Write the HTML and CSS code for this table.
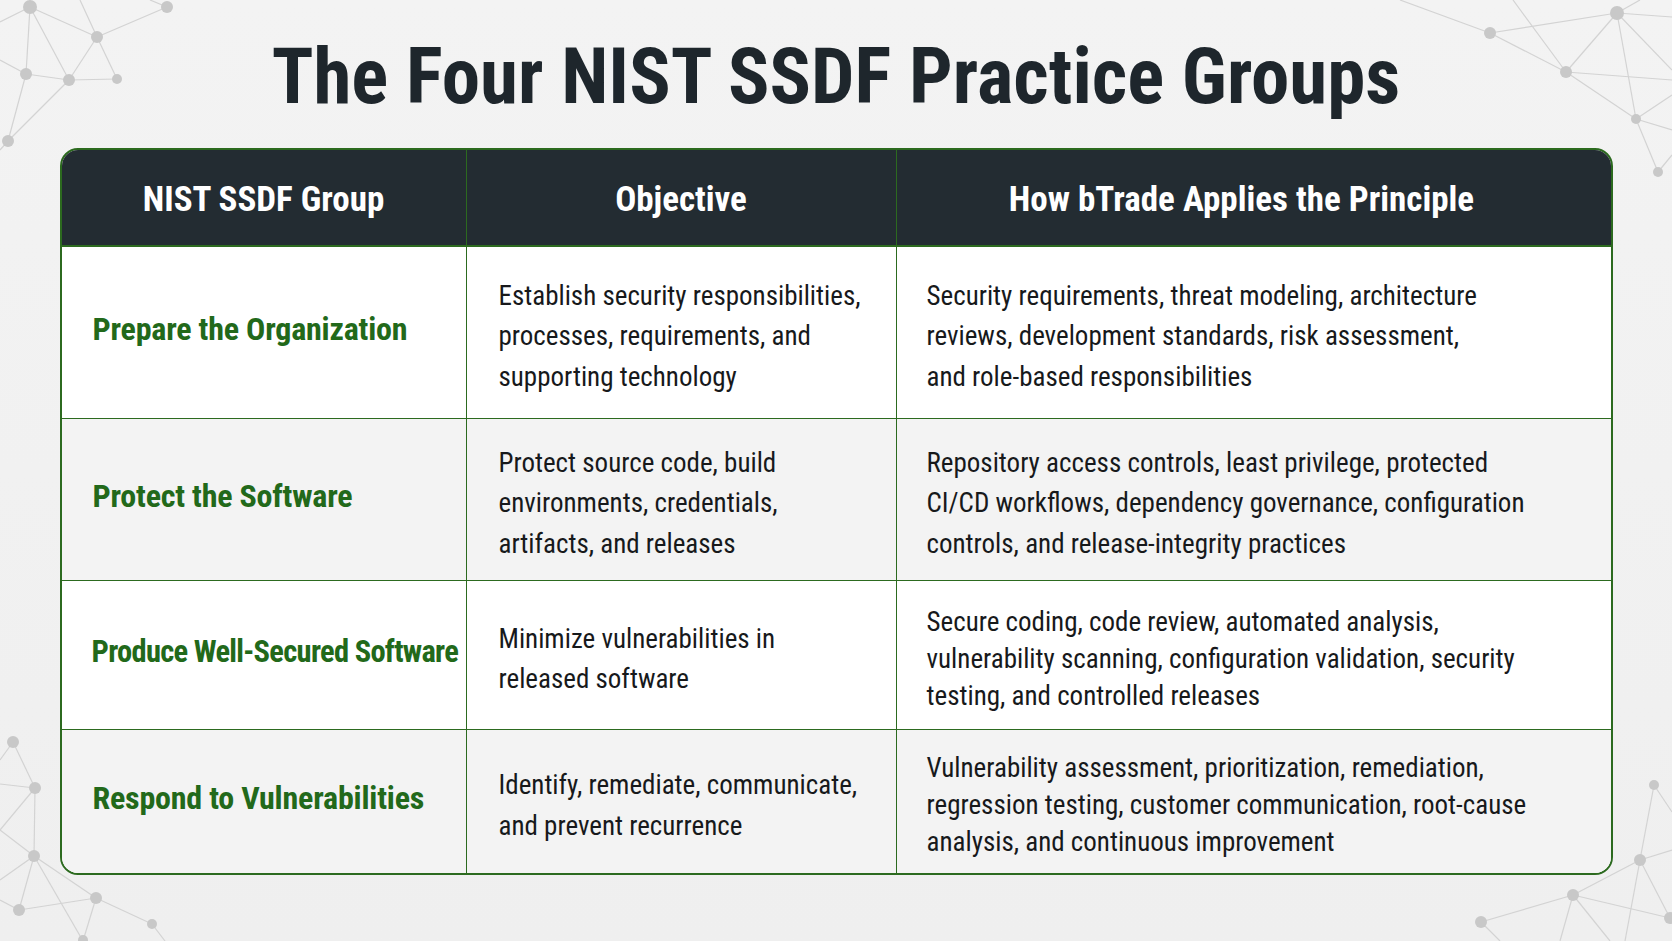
FILE: index.html
```html
<!DOCTYPE html>
<html lang="en">
<head>
<meta charset="utf-8">
<title>The Four NIST SSDF Practice Groups</title>
<link rel="stylesheet" href="styles.css">
</head>
<body>
<div class="page">
  <svg class="network" width="1672" height="941" viewBox="0 0 1672 941" aria-hidden="true">
    <g class="links">
      <line x1="30" y1="7" x2="97" y2="37"/><line x1="97" y1="37" x2="167" y2="7"/>
      <line x1="30" y1="7" x2="26" y2="74"/><line x1="30" y1="7" x2="69" y2="80"/>
      <line x1="26" y1="74" x2="69" y2="80"/><line x1="69" y1="80" x2="117" y2="79"/>
      <line x1="97" y1="37" x2="117" y2="79"/><line x1="97" y1="37" x2="69" y2="80"/>
      <line x1="26" y1="74" x2="8" y2="141"/><line x1="69" y1="80" x2="8" y2="141"/>
      <line x1="26" y1="74" x2="0" y2="60"/><line x1="30" y1="7" x2="0" y2="22"/>
      <line x1="80" y1="0" x2="97" y2="37"/><line x1="167" y1="7" x2="150" y2="0"/>
      <line x1="8" y1="141" x2="0" y2="150"/>
      <line x1="1490" y1="33" x2="1617" y2="13"/><line x1="1490" y1="33" x2="1566" y2="72"/>
      <line x1="1617" y1="13" x2="1566" y2="72"/><line x1="1617" y1="13" x2="1636" y2="119"/>
      <line x1="1566" y1="72" x2="1636" y2="119"/><line x1="1566" y1="72" x2="1672" y2="80"/>
      <line x1="1636" y1="119" x2="1658" y2="172"/><line x1="1636" y1="119" x2="1672" y2="130"/>
      <line x1="1617" y1="13" x2="1672" y2="17"/><line x1="1617" y1="13" x2="1672" y2="70"/>
      <line x1="1513" y1="0" x2="1566" y2="72"/><line x1="1400" y1="0" x2="1490" y2="33"/>
      <line x1="1617" y1="13" x2="1640" y2="0"/><line x1="1636" y1="119" x2="1672" y2="95"/>
      <line x1="1658" y1="172" x2="1672" y2="155"/>
      <line x1="13" y1="742" x2="35" y2="788"/><line x1="35" y1="788" x2="0" y2="830"/>
      <line x1="35" y1="788" x2="34" y2="856"/><line x1="0" y1="830" x2="34" y2="856"/>
      <line x1="34" y1="856" x2="19" y2="910"/><line x1="34" y1="856" x2="96" y2="898"/>
      <line x1="34" y1="856" x2="83" y2="941"/><line x1="19" y1="910" x2="96" y2="898"/>
      <line x1="96" y1="898" x2="152" y2="924"/><line x1="19" y1="910" x2="0" y2="900"/>
      <line x1="13" y1="742" x2="0" y2="760"/><line x1="0" y1="784" x2="35" y2="788"/>
      <line x1="96" y1="898" x2="83" y2="941"/><line x1="152" y1="924" x2="165" y2="941"/>
      <line x1="0" y1="880" x2="34" y2="856"/>
      <line x1="1654" y1="785" x2="1640" y2="860"/><line x1="1654" y1="785" x2="1672" y2="812"/>
      <line x1="1640" y1="860" x2="1573" y2="895"/><line x1="1640" y1="860" x2="1670" y2="918"/>
      <line x1="1640" y1="860" x2="1672" y2="850"/><line x1="1573" y1="895" x2="1481" y2="922"/>
      <line x1="1573" y1="895" x2="1670" y2="918"/><line x1="1573" y1="895" x2="1560" y2="941"/>
      <line x1="1481" y1="922" x2="1500" y2="941"/><line x1="1640" y1="860" x2="1625" y2="941"/>
      <line x1="1573" y1="895" x2="1610" y2="941"/>
    </g>
    <g class="nodes">
      <circle cx="30" cy="7" r="7"/><circle cx="167" cy="7" r="6"/><circle cx="97" cy="37" r="6"/>
      <circle cx="26" cy="74" r="6"/><circle cx="69" cy="80" r="6"/><circle cx="117" cy="79" r="5"/>
      <circle cx="8" cy="141" r="6"/>
      <circle cx="1490" cy="33" r="6"/><circle cx="1617" cy="13" r="7"/><circle cx="1566" cy="72" r="6"/>
      <circle cx="1636" cy="119" r="5"/><circle cx="1658" cy="172" r="5"/>
      <circle cx="13" cy="742" r="6"/><circle cx="35" cy="788" r="6"/><circle cx="34" cy="856" r="6"/>
      <circle cx="19" cy="910" r="6"/><circle cx="96" cy="898" r="6"/><circle cx="83" cy="940" r="5"/>
      <circle cx="152" cy="924" r="5"/>
      <circle cx="1654" cy="785" r="5"/><circle cx="1640" cy="860" r="6"/><circle cx="1573" cy="895" r="6"/>
      <circle cx="1481" cy="922" r="6"/><circle cx="1670" cy="918" r="6"/>
    </g>
  </svg>

  <main class="content">
    <h1 class="title">The Four NIST SSDF Practice Groups</h1>

    <div class="table" role="table">
      <div class="th first">NIST SSDF Group</div>
      <div class="th">Objective</div>
      <div class="th last">How bTrade Applies the Principle</div>

      <div class="td group">Prepare the Organization</div>
      <div class="td">Establish security responsibilities,<br>processes, requirements, and<br>supporting technology</div>
      <div class="td last">Security requirements, threat modeling, architecture<br>reviews, development standards, risk assessment,<br>and role-based responsibilities</div>

      <div class="td group alt">Protect the Software</div>
      <div class="td alt">Protect source code, build<br>environments, credentials,<br>artifacts, and releases</div>
      <div class="td alt last">Repository access controls, least privilege, protected<br>CI/CD workflows, dependency governance, configuration<br>controls, and release-integrity practices</div>

      <div class="td group squeeze">Produce Well-Secured Software</div>
      <div class="td">Minimize vulnerabilities in<br>released software</div>
      <div class="td last tight">Secure coding, code review, automated analysis,<br>vulnerability scanning, configuration validation, security<br>testing, and controlled releases</div>

      <div class="td group alt bottom">Respond to Vulnerabilities</div>
      <div class="td alt bottom">Identify, remediate, communicate,<br>and prevent recurrence</div>
      <div class="td alt bottom last tight">Vulnerability assessment, prioritization, remediation,<br>regression testing, customer communication, root-cause<br>analysis, and continuous improvement</div>
    </div>
  </main>
</div>
</body>
</html>
```

FILE: styles.css
```css
* { box-sizing: border-box; }

html, body {
  margin: 0;
  padding: 0;
}

body {
  background: #f1f1f1;
  font-family: "Roboto Condensed", "Liberation Sans Narrow", "Arial Narrow", "DejaVu Sans Condensed", sans-serif;
  font-stretch: condensed;
  color: #1c1f22;
}

.page {
  position: relative;
  width: 1672px;
  height: 941px;
  overflow: hidden;
  background: linear-gradient(180deg, #f3f3f3 0%, #efefef 100%);
}

.network {
  position: absolute;
  left: 0;
  top: 0;
  z-index: 0;
}

.network .links line {
  stroke: #d3d3d3;
  stroke-width: 1.2;
}

.network .nodes circle {
  fill: #c8c8c8;
}

.content {
  position: relative;
  z-index: 1;
  display: flex;
  flex-direction: column;
  align-items: center;
}

.title {
  margin: 0;
  height: 148px;
  padding-top: 32px;
  font-weight: 700;
  font-size: 77px;
  line-height: 90px;
  color: #1e262c;
  white-space: nowrap;
}

.table {
  width: 1553px;
  display: grid;
  grid-template-columns: 405px 430px minmax(0, 1fr);
  grid-template-rows: 97px 172px 162px 149px 143px;
  border: 2px solid #2c6a1f;
  border-radius: 18px;
  overflow: hidden;
  background: #ffffff;
}

.th {
  background: #232c32;
  color: #ffffff;
  font-weight: 700;
  font-size: 35px;
  display: flex;
  align-items: center;
  justify-content: center;
  border-right: 1.5px solid #2c6a1f;
  border-bottom: 2px solid #2c6a1f;
  padding-top: 3px;
  white-space: nowrap;
}

.th.last {
  padding-right: 24px;
}

.th.last,
.td.last {
  border-right: none;
}

.td {
  display: flex;
  align-items: center;
  padding: 8px 20px 0 32px;
  background: #ffffff;
  font-size: 27px;
  font-weight: 400;
  line-height: 40.5px;
  color: #17191b;
  border-right: 1.5px solid #2c6a1f;
  border-bottom: 1.5px solid #2c6a1f;
  white-space: nowrap;
}

.td.alt {
  background: #f3f3f3;
}

.td.bottom {
  border-bottom: none;
}

.td.tight {
  line-height: 37px;
}

.td.group {
  font-weight: 700;
  font-size: 32px;
  letter-spacing: -0.2px;
  color: #22691a;
  padding: 0 0 6px 31px;
}

.td.group.squeeze {
  font-size: 30.5px;
  letter-spacing: -0.7px;
  padding-left: 30px;
}

.td.last {
  padding-left: 30px;
}
```
